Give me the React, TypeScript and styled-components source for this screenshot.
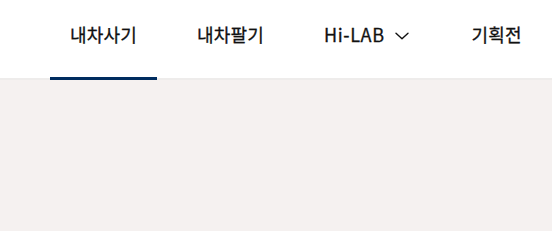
import * as React from "react"
import styled, {createGlobalStyle} from "styled-components";

const GlobalStyles = createGlobalStyle`
  html, body {
    margin: 0;
    padding: 0;
    background: #f5f1f0;
  }
  body {
    font-family: 'Noto Sans CJK KR', 'Noto Sans', sans-serif;
  }
`

const tabs = [
    {label: "내차사기", active: true},
    {label: "내차팔기"},
    {label: "Hi-LAB", dropdown: true},
    {label: "기획전"},
]

export default function App() {
    return (
        <>
            <GlobalStyles/>
            <Header>
                <Nav>
                    {tabs.map(tab => (
                        <Tab key={tab.label} $active={tab.active}>
                            <Label $latin={tab.dropdown}>{tab.label}</Label>
                            {tab.dropdown && <Chevron/>}
                        </Tab>
                    ))}
                </Nav>
            </Header>
            <Page/>
        </>
    )
}

const Chevron = () => (
    <ChevronSvg width="14" height="8" viewBox="0 0 14 8" fill="none">
        <path d="M1 1.2 L7 6.8 L13 1.2" stroke="#111" strokeWidth="1.4" strokeLinecap="round" strokeLinejoin="round"/>
    </ChevronSvg>
)

const ChevronSvg = styled.svg`
  margin: 4px 3px 0 10px;
`

const Header = styled.header`
  height: 80px;
  background: #fff;
  border-bottom: 2px solid #eeeceb;
  box-sizing: border-box;
`

const Nav = styled.nav`
  display: flex;
  flex-direction: row;
  height: 100%;
  padding-left: 50px;
  gap: 20px;
`

const Tab = styled.div<{ $active?: boolean }>`
  position: relative;
  display: flex;
  align-items: center;
  padding: 0 20px 10px;
  font-size: 18px;
  font-weight: 400;
  color: #111;
  white-space: nowrap;
  -webkit-text-stroke: 0.3px #111;

  &::after {
    content: "";
    display: ${p => p.$active ? "block" : "none"};
    position: absolute;
    left: 0;
    right: 0;
    bottom: -2px;
    height: 3px;
    background: #002c5f;
  }
`

const Label = styled.span<{ $latin?: boolean }>`
  letter-spacing: ${p => p.$latin ? "0.6px" : "0.2px"};
`

const Page = styled.main`
  height: 151px;
  background: #f5f1f0;
`
